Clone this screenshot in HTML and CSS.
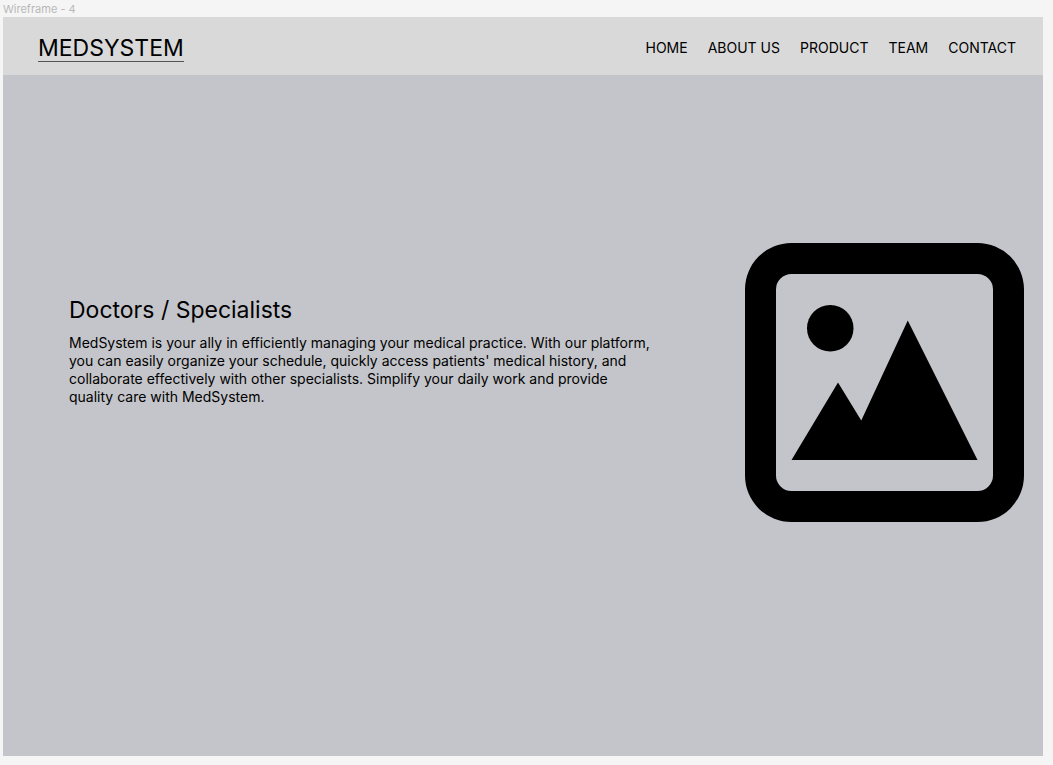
FILE: index.html
```html
<!DOCTYPE html>
<html lang="en">
<head>
<meta charset="utf-8">
<title>MedSystem</title>
<link rel="stylesheet" href="styles.css">
</head>
<body>
<p class="frame-label">Wireframe - 4</p>
<div class="frame">
  <header class="header">
    <a class="brand" href="#">MEDSYSTEM</a>
    <nav class="nav">
      <a href="#">HOME</a>
      <a href="#">ABOUT US</a>
      <a href="#">PRODUCT</a>
      <a href="#">TEAM</a>
      <a href="#">CONTACT</a>
    </nav>
  </header>
  <main class="hero">
    <section class="copy">
      <h1>Doctors / Specialists</h1>
      <p>MedSystem is your ally in efficiently managing your medical practice. With our platform, you can easily organize your schedule, quickly access patients' medical history, and collaborate effectively with other specialists. Simplify your daily work and provide quality care with MedSystem.</p>
    </section>
    <svg class="picture" viewBox="0 0 18 18" role="img" aria-label="Picture placeholder">
      <path fill-rule="evenodd" d="M3 0H15A3 3 0 0 1 18 3V15A3 3 0 0 1 15 18H3A3 3 0 0 1 0 15V3A3 3 0 0 1 3 0ZM3 2A1 1 0 0 0 2 3V15A1 1 0 0 0 3 16H15A1 1 0 0 0 16 15V3A1 1 0 0 0 15 2Z"/>
      <circle cx="5.5" cy="5.5" r="1.5"/>
      <path d="M3 14L6 9L7.5 11.45L10.5 5L15 14Z"/>
    </svg>
  </main>
</div>
</body>
</html>
```
FILE: styles.css
```css
* {
  box-sizing: border-box;
}

body {
  margin: 0;
  min-height: 100vh;
  padding: 2px 10px 9px 3px;
  display: flex;
  flex-direction: column;
  background: #f5f5f5;
  color: #000;
  font-family: Inter, "Liberation Sans", sans-serif;
}

.frame-label {
  margin: 0;
  font-size: 11px;
  line-height: 15px;
  color: #b8b8b8;
}

.frame {
  flex: 1;
  display: flex;
  flex-direction: column;
  background: #c4c5ca;
}

.header {
  display: flex;
  align-items: flex-start;
  justify-content: space-between;
  padding: 18px 27px 13px 35px;
  background: #d9d9d9;
}

.brand {
  border-bottom: 1px solid #555;
  color: inherit;
  font-size: 23px;
  line-height: 26px;
  text-decoration: none;
}

.nav {
  display: flex;
  gap: 20px;
}

.nav a {
  color: inherit;
  font-size: 14px;
  line-height: 26px;
  text-decoration: none;
}

.hero {
  flex: 1;
  display: flex;
  align-items: center;
  justify-content: space-between;
  gap: 64px;
  padding: 0 19px 66px 66px;
}

.copy {
  flex: 1;
  max-width: 586px;
  padding-bottom: 64px;
}

.copy h1 {
  margin: 0 0 10px;
  font-size: 23px;
  font-weight: 400;
  line-height: 28px;
}

.copy p {
  margin: 0;
  font-size: 14px;
  line-height: 18px;
}

.picture {
  flex: none;
  width: 279px;
  height: 279px;
}
```
